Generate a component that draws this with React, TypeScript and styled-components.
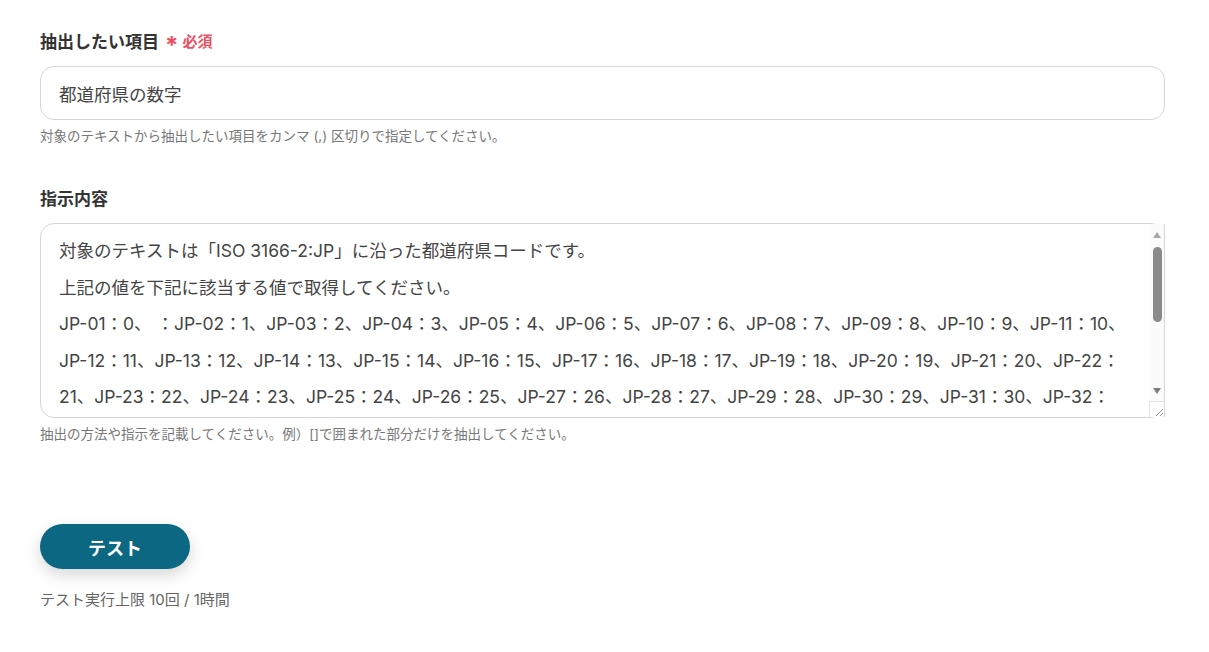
import { FC } from "react";
import styled, { createGlobalStyle } from "styled-components";

const GlobalStyle = createGlobalStyle`
  body {
    margin: 0;
    background: #ffffff;
    font-family: Inter, "Noto Sans CJK JP", sans-serif;
    color: #333333;
  }
`;

const Page = styled.div`
  padding: 32px 44px 0 40px;
  display: flex;
  flex-direction: column;
`;

const Field = styled.div<{ $gap?: number }>`
  display: flex;
  flex-direction: column;
  margin-bottom: ${({ $gap }) => $gap ?? 0}px;
`;

const Label = styled.div`
  display: flex;
  align-items: center;
  gap: 6px;
  font-size: 17px;
  font-weight: 700;
  color: #333333;
  line-height: 20px;
  margin-bottom: 14px;
`;

const Required = styled.span`
  display: flex;
  align-items: center;
  gap: 4px;
  font-size: 15px;
  font-weight: 700;
  color: #ee4d62;
`;

const Star = styled.span`
  font-size: 24px;
  line-height: 14px;
  font-weight: 700;
  transform: translateY(4px);
`;

const TextInput = styled.input`
  box-sizing: border-box;
  width: 100%;
  height: 54px;
  border: 1px solid #d3d6dc;
  border-radius: 14px;
  padding: 0 18px;
  font-family: inherit;
  font-size: 17.5px;
  color: #444444;
  outline: none;
  background: #ffffff;
`;

const AreaWrap = styled.div`
  position: relative;
  height: 195px;
`;

const TextArea = styled.textarea`
  box-sizing: border-box;
  display: block;
  width: 100%;
  height: 100%;
  border: 1px solid #d3d6dc;
  border-radius: 14px;
  padding: 9px 22px 8px 18px;
  font-family: inherit;
  font-size: 17.5px;
  line-height: 36.5px;
  color: #444444;
  outline: none;
  overflow: hidden;
  resize: none;
  background: #ffffff;
`;

const ScrollBar = styled.div`
  position: absolute;
  top: 1px;
  right: 0;
  bottom: 16px;
  width: 14px;
  display: flex;
  flex-direction: column;
  align-items: center;
  background: #fbfbfb;
  border-right: 1px solid #d3d6dc;
`;

const ArrowButton = styled.div<{ $down?: boolean }>`
  height: 22px;
  display: flex;
  align-items: center;
  justify-content: center;

  &::before {
    content: "";
    border-left: 4.5px solid transparent;
    border-right: 4.5px solid transparent;
    ${({ $down }) =>
      $down
        ? "border-top: 6px solid #7c7c7c;"
        : "border-bottom: 6px solid #a6a6a6;"}
  }
`;

const Track = styled.div`
  flex: 1;
  display: flex;
  flex-direction: column;
`;

const Thumb = styled.div`
  margin-top: 1px;
  width: 9px;
  height: 75px;
  border-radius: 5px;
  background: #8b8b8b;
`;

const Corner = styled.div`
  position: absolute;
  right: 0;
  bottom: 1px;
  width: 14px;
  height: 15px;
  background: #ffffff;
  border-top: 1px solid #e4e4e4;
  border-left: 1px solid #e4e4e4;
  border-right: 1px solid #d3d6dc;
  display: flex;
  align-items: flex-end;
  justify-content: flex-end;
`;

const Help = styled.div`
  font-size: 13.5px;
  color: #777777;
  margin-top: 7px;
  line-height: 18px;
`;

const Action = styled.div`
  display: flex;
  flex-direction: column;
  align-items: flex-start;
  gap: 21px;
`;

const Button = styled.button`
  width: 150px;
  height: 45px;
  border: none;
  border-radius: 23px;
  background: #0b6782;
  color: #ffffff;
  font-family: inherit;
  font-size: 18px;
  font-weight: 700;
  cursor: pointer;
  box-shadow: 0 6px 16px rgba(0, 0, 0, 0.16);
`;

const Limit = styled.div`
  font-size: 15px;
  line-height: 20px;
  color: #666666;
`;

const codes = Array.from({ length: 47 }, (_, i) => {
  const code = `JP-${String(i + 1).padStart(2, "0")}：${i}`;
  return i === 0 ? `${code}、 ` : code;
})
  .join("、")
  .replace("、 、", "、 ：");

const instruction = [
  "対象のテキストは「ISO 3166-2:JP」に沿った都道府県コードです。",
  "上記の値を下記に該当する値で取得してください。",
  codes,
].join("\n");

const App: FC = () => {
  return (
    <Page>
      <GlobalStyle />
      <Field $gap={44}>
        <Label>
          抽出したい項目
          <Required>
            <Star>*</Star>必須
          </Required>
        </Label>
        <TextInput defaultValue="都道府県の数字" />
        <Help>対象のテキストから抽出したい項目をカンマ (,) 区切りで指定してください。</Help>
      </Field>
      <Field $gap={81}>
        <Label>指示内容</Label>
        <AreaWrap>
          <TextArea defaultValue={instruction} />
          <ScrollBar>
            <ArrowButton />
            <Track>
              <Thumb />
            </Track>
            <ArrowButton $down />
          </ScrollBar>
          <Corner>
            <svg width="12" height="12" viewBox="0 0 12 12">
              <path d="M11 4 L4 11 M11 8 L8 11" stroke="#9a9a9a" strokeWidth="1" />
            </svg>
          </Corner>
        </AreaWrap>
        <Help>抽出の方法や指示を記載してください。例）[]で囲まれた部分だけを抽出してください。</Help>
      </Field>
      <Action>
        <Button>テスト</Button>
        <Limit>テスト実行上限 10回 / 1時間</Limit>
      </Action>
    </Page>
  );
};

export default App;
